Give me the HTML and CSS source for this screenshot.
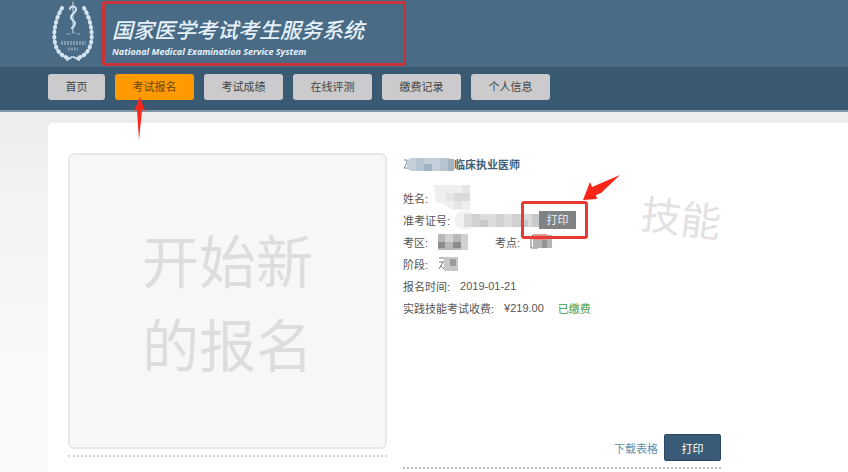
FILE: index.html
```html
<!DOCTYPE html>
<html lang="zh-CN">
<head>
    <meta charset="UTF-8">
    <meta name="viewport" content="width=device-width, initial-scale=1.0">
    <title>国家医学考试考生服务系统</title>
    <link rel="stylesheet" href="styles.css">
</head>
<body>
    <header class="header">
        <svg class="logo" viewBox="0 0 46 62" aria-hidden="true">
            <g fill="none" stroke="#d3e4f0" stroke-linecap="round">
                <path d="M11 8 C3 20 1 43 10 52 Q13 56 19 57" stroke-width="1"/>
                <path d="M35 8 C43 20 45 43 36 52 Q33 56 27 57" stroke-width="1"/>
                <path d="M12 7 C4 20 1 41 9 51 Q12 55 18 57" stroke-width="4" stroke-dasharray="1 4"/>
                <path d="M34 7 C42 20 45 41 37 51 Q34 55 28 57" stroke-width="4" stroke-dasharray="1 4"/>
                <path d="M23 1 V31" stroke-width="1"/>
                <path d="M20 8 C20 4 27 5 26 9 C25 13 20 13 21 17 C22 20 26 20 25 23 Q24 26 22 27" stroke-width="2"/>
                <path d="M17 33 H20 M22 32 H25 M27 33 H30" stroke-width="1" opacity=".6"/>
                <path d="M11 42 H36" stroke-width="4" stroke-linecap="butt" stroke-dasharray="2 1" opacity=".4"/>
                <path d="M18 48 H28" stroke-width="3" stroke-linecap="butt" stroke-dasharray="2 1" opacity=".4"/>
                <path d="M17 59 L22 56 M29 59 L24 56" stroke-width="2"/>
            </g>
        </svg>
        <div class="brand">
            <h1>国家医学考试考生服务系统</h1>
            <p>National Medical Examination Service System</p>
        </div>
    </header>

    <nav class="nav-bar">
        <a href="#" class="short">首页</a>
        <a href="#" class="active">考试报名
            <svg class="arrow-up" viewBox="0 0 12 44" aria-hidden="true"><path d="M7 0 L12 14 L9 13 L6 43 L4 13 L1 14 Z" fill="#f9261c"/></svg>
        </a>
        <a href="#">考试成绩</a>
        <a href="#">在线评测</a>
        <a href="#">缴费记录</a>
        <a href="#">个人信息</a>
    </nav>

    <main class="container">
        <section class="new-entry">
            <a href="#" class="card">开始新<br>的报名</a>
        </section>

        <section class="entry">
            <h2>
                <svg class="mask" width="51" height="16" viewBox="0 0 51 16" aria-hidden="true">
                    <path d="M1 4 H4 V7 L1 12 H5" fill="none" stroke="#6e899b"/>
                    <rect x="4" y="2" width="46" height="13" rx="5" fill="#c3d0d9"/>
                    <path d="M13 2h8v13h-8z M37 2h8v13h-8z" fill="#b5c5d0"/>
                    <path d="M21 8h8v7h-8z M45 3h6v12h-6z" fill="#a2b4c1"/>
                </svg>临床执业医师
            </h2>
            <div class="row">
                <span>姓名:</span>
                <svg class="mask name-mask" width="40" height="30" viewBox="0 0 40 30" aria-hidden="true">
                    <path d="M2 2H38V27H20L10 20H4Z" fill="#f0eff0"/>
                    <path d="M14 10h8v8h-8z M30 2h8v8h-8z M22 18h8v8h-8z" fill="#e6e4e6"/>
                    <path d="M22 10h8v8h-8z M30 10h8v8h-8z" fill="#dbd9db"/>
                </svg>
            </div>
            <div class="row">
                <span>准考证号:</span>
                <svg class="mask number-mask" width="84" height="18" viewBox="0 0 84 18" aria-hidden="true">
                    <rect x="0" y="0" width="20" height="18" rx="8" fill="#f2f1f2"/>
                    <path d="M9 3H84V16H9z" fill="#dcdbdc"/>
                    <path d="M17 3h8v13h-8z M41 3h8v13h-8z M57 3h8v13h-8z" fill="#d2d1d2"/>
                    <path d="M25 9h8v7h-8z M65 9h8v7h-8z M77 3h7v13h-7z" fill="#c9c8ca"/>
                </svg>
                <span class="print-wrap">
                    <button type="button" class="print-small">打印</button>
                    <svg class="arrow-left" viewBox="0 0 38 26" aria-hidden="true"><path d="M0 25 L7 7 L9 12 L37 0 L18 18 L13 20 L14 24 Z" fill="#fb2418"/></svg>
                </span>
            </div>
            <div class="row">
                <span class="area">考区:
                    <svg class="mask" width="32" height="18" viewBox="0 0 32 18" aria-hidden="true">
                        <path d="M0 1H30V17H0z" fill="#b9b7b9"/>
                        <path d="M7 1h8v8H7z M23 1h7v16h-7z" fill="#d2d0d2"/>
                        <path d="M0 9h7v6H0z M15 9h8v6h-8z" fill="#8d8b8e"/>
                    </svg>
                </span>
                <span>考点:
                    <svg class="mask" width="24" height="18" viewBox="0 0 24 18" aria-hidden="true">
                        <path d="M3 2 L1 4 V15 H8" fill="none" stroke="#777"/>
                        <path d="M3 2H22V15H3z" fill="#b5b3b5"/>
                        <path d="M3 1h14v6H3z" fill="#db9694"/>
                        <path d="M12 7h5v8h-5z" fill="#969496"/>
                    </svg>
                </span>
            </div>
            <div class="row">
                <span>阶段:
                    <svg class="mask" width="24" height="18" viewBox="0 0 24 18" aria-hidden="true">
                        <path d="M1 3 H6 M1 7 H6 M5 7 L1 14 M3 11 L7 15" fill="none" stroke="#777"/>
                        <path d="M6 2H20V16H6z" fill="#c9c7c9"/>
                        <path d="M12 4h6v7h-6z" fill="#9c9a9d"/>
                    </svg>
                </span>
            </div>
            <div class="row"><span>报名时间:</span><span class="value">2019-01-21</span></div>
            <div class="row"><span>实践技能考试收费:</span><span class="value">¥219.00</span><span class="paid">已缴费</span></div>
            <div class="stamp">技能</div>
            <div class="actions">
                <a href="#">下载表格</a>
                <button type="button" class="print">打印</button>
            </div>
        </section>
    </main>
</body>
</html>
```
FILE: styles.css
```css
* {
    box-sizing: border-box;
}
body {
    font-family: "Liberation Sans", "Noto Sans CJK SC", sans-serif;
    font-size: 11px;
    margin: 0;
    min-height: 100vh;
    display: flex;
    flex-direction: column;
    color: #555;
    background: linear-gradient(#ececee 112px, #f3f2f5 200px, #faf9fc 400px);
}
h1, h2, p {
    margin: 0;
}
a {
    text-decoration: none;
}
button {
    font: inherit;
    border: 0;
    padding: 0;
    cursor: pointer;
}

/* Header */
.header {
    display: flex;
    gap: 6px;
    height: 67px;
    padding: 1px 50px;
    background-color: #496b86;
}
.logo {
    width: 46px;
    height: 62px;
}
.brand {
    width: 304px;
    height: 65px;
    padding: 13px 7px 0;
    border: 3px solid #c9343a;
    border-radius: 3px;
    color: #e6f1fa;
    font-style: italic;
    white-space: nowrap;
}
.brand h1 {
    font-size: 21px;
    font-weight: 500;
    line-height: 28px;
}
.brand p {
    font-family: "Open Sans", "Noto Sans", sans-serif;
    font-size: 9px;
    font-weight: bold;
    line-height: 14px;
}

/* Navigation */
.nav-bar {
    display: flex;
    gap: 10px;
    height: 45px;
    padding: 7px 48px 0;
    background-color: #3a5a74;
    border-bottom: 2px solid #8198a8;
}
.nav-bar a {
    position: relative;
    width: 79px;
    height: 26px;
    line-height: 26px;
    text-align: center;
    color: #444;
    background-color: #cbcbcd;
    border-radius: 3px;
}
.nav-bar .short {
    width: 57px;
}
.nav-bar .active {
    color: #6b4714;
    background-color: #ff9a03;
}
.arrow-up {
    position: absolute;
    left: 18px;
    top: 23px;
    width: 12px;
    height: 44px;
    z-index: 1;
}

/* Content */
.container {
    flex: 1;
    display: grid;
    grid-template-columns: 319px 318px;
    gap: 16px;
    align-items: start;
    margin: 11px 0 0 48px;
    padding: 30px 20px 0;
    background-color: #fff;
    border-radius: 5px 0 0 0;
}
.new-entry {
    padding-bottom: 6px;
    border-bottom: 2px dotted #d3d1d5;
}
.card {
    display: flex;
    align-items: center;
    justify-content: center;
    height: 296px;
    padding-top: 8px;
    font-size: 57px;
    line-height: 84px;
    color: #dddcde;
    background-color: #f7f6f9;
    border: 2px solid #e8e7ea;
    border-radius: 6px;
}
.entry {
    position: relative;
    border-bottom: 2px dotted #bbb9bd;
}
.entry h2 {
    display: flex;
    align-items: center;
    height: 22px;
    margin-bottom: 12px;
    font-size: 11px;
    color: #416078;
}
.row {
    display: flex;
    align-items: center;
    height: 22px;
    white-space: nowrap;
}
.row span {
    display: flex;
    align-items: center;
}
.mask {
    flex: none;
}
.name-mask {
    margin-left: 4px;
}
.number-mask {
    margin-left: 5px;
}
.row .area {
    width: 92px;
}
.row span > .mask {
    margin-left: 10px;
}
.value {
    margin-left: 10px;
}
.paid {
    margin-left: 14px;
    color: #3f9b43;
}
.print-wrap {
    position: relative;
}
.print-wrap::before {
    content: "";
    position: absolute;
    box-sizing: border-box;
    left: -18px;
    top: -10px;
    width: 67px;
    height: 38px;
    border: 3px solid #e53b34;
    border-radius: 3px;
}
.print-small {
    width: 37px;
    height: 18px;
    line-height: 18px;
    color: #eee;
    background-color: #7f8385;
}
.arrow-left {
    position: absolute;
    left: 44px;
    top: -36px;
    width: 38px;
    height: 26px;
}
.stamp {
    position: absolute;
    right: 0;
    top: 36px;
    font-size: 40px;
    line-height: 60px;
    color: #e3e1e3;
    transform: rotate(7deg);
}
.actions {
    display: flex;
    align-items: center;
    justify-content: flex-end;
    gap: 6px;
    margin-top: 115px;
    padding-bottom: 6px;
}
.actions a {
    color: #6190ab;
}
.print {
    width: 57px;
    height: 27px;
    color: #fff;
    background-color: #3a5b77;
    border: 1px solid #294960;
    border-radius: 2px;
}
```
